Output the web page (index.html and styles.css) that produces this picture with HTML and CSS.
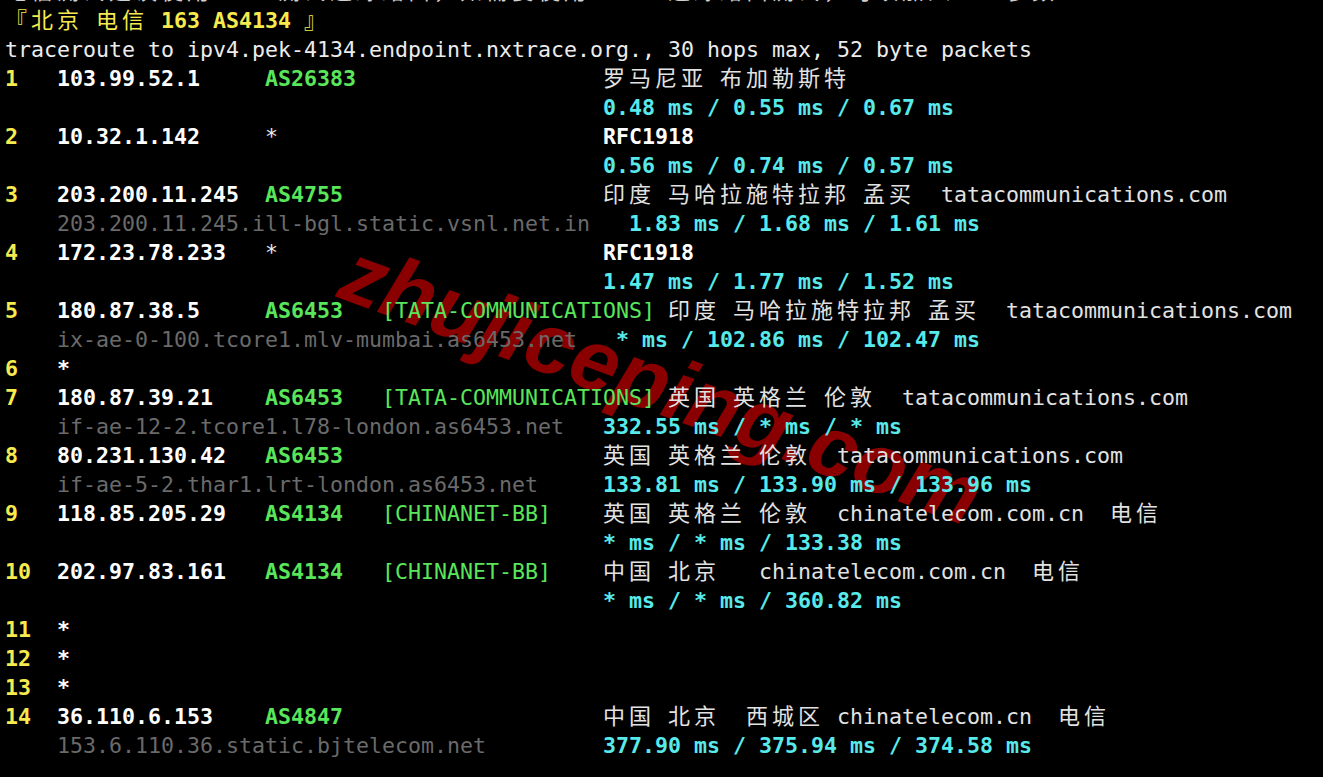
FILE: index.html
```html
<!DOCTYPE html>
<html lang="zh-CN">
<head>
  <meta charset="UTF-8" />
  <title>nexttrace - 北京电信</title>
  <link rel="stylesheet" href="styles.css">
</head>
<body>

<div class="mark">zhujiceping.com</div>

<div class="term">
  <!-- previous line, scrolled mostly out of view -->
  <div class="ln dim"><span class="c">电信测试建议使用</span>     <span class="c">测试追踪路由，如需要使用</span>      <span class="c">追踪路由测试，可以加入</span> -T <span class="c">参数</span></div>

  <div class="ln"><span class="hy"><span class="c">『北京</span> <span class="c">电信</span></span> <span class="hl">163 AS4134</span> <span class="hy c">』</span></div>
  <div class="ln">traceroute to ipv4.pek-4134.endpoint.nxtrace.org., 30 hops max, 52 byte packets</div>

  <div class="ln"><span class="hop">1</span><span class="ip">103.99.52.1</span><span class="asn">AS26383</span><span class="org"></span><span class="loc"><span class="c">罗马尼亚</span> <span class="c">布加勒斯特</span></span></div>
  <div class="ln"><span class="hop"></span><span class="host"></span><span class="rtt">0.48 ms / 0.55 ms / 0.67 ms</span></div>

  <div class="ln"><span class="hop">2</span><span class="ip">10.32.1.142</span><span class="asn none">*</span><span class="org"></span><span class="rfc">RFC1918</span></div>
  <div class="ln"><span class="hop"></span><span class="host"></span><span class="rtt">0.56 ms / 0.74 ms / 0.57 ms</span></div>

  <div class="ln"><span class="hop">3</span><span class="ip">203.200.11.245</span><span class="asn">AS4755</span><span class="org"></span><span class="loc"><span class="c">印度</span> <span class="c">马哈拉施特拉邦</span> <span class="c">孟买</span>  tatacommunications.com</span></div>
  <div class="ln"><span class="hop"></span><span class="host">203.200.11.245.ill-bgl.static.vsnl.net.in</span><span class="rtt">1.83 ms / 1.68 ms / 1.61 ms</span></div>

  <div class="ln"><span class="hop">4</span><span class="ip">172.23.78.233</span><span class="asn none">*</span><span class="org"></span><span class="rfc">RFC1918</span></div>
  <div class="ln"><span class="hop"></span><span class="host"></span><span class="rtt">1.47 ms / 1.77 ms / 1.52 ms</span></div>

  <div class="ln"><span class="hop">5</span><span class="ip">180.87.38.5</span><span class="asn">AS6453</span><span class="org">[TATA-COMMUNICATIONS]</span><span class="loc"><span class="c">印度</span> <span class="c">马哈拉施特拉邦</span> <span class="c">孟买</span>  tatacommunications.com</span></div>
  <div class="ln"><span class="hop"></span><span class="host">ix-ae-0-100.tcore1.mlv-mumbai.as6453.net</span><span class="rtt">* ms / 102.86 ms / 102.47 ms</span></div>

  <div class="ln"><span class="hop">6</span><span class="ip">*</span></div>

  <div class="ln"><span class="hop">7</span><span class="ip">180.87.39.21</span><span class="asn">AS6453</span><span class="org">[TATA-COMMUNICATIONS]</span><span class="loc"><span class="c">英国</span> <span class="c">英格兰</span> <span class="c">伦敦</span>  tatacommunications.com</span></div>
  <div class="ln"><span class="hop"></span><span class="host">if-ae-12-2.tcore1.l78-london.as6453.net</span><span class="rtt">332.55 ms / * ms / * ms</span></div>

  <div class="ln"><span class="hop">8</span><span class="ip">80.231.130.42</span><span class="asn">AS6453</span><span class="org"></span><span class="loc"><span class="c">英国</span> <span class="c">英格兰</span> <span class="c">伦敦</span>  tatacommunications.com</span></div>
  <div class="ln"><span class="hop"></span><span class="host">if-ae-5-2.thar1.lrt-london.as6453.net</span><span class="rtt">133.81 ms / 133.90 ms / 133.96 ms</span></div>

  <div class="ln"><span class="hop">9</span><span class="ip">118.85.205.29</span><span class="asn">AS4134</span><span class="org">[CHINANET-BB]</span><span class="loc"><span class="c">英国</span> <span class="c">英格兰</span> <span class="c">伦敦</span>  chinatelecom.com.cn  <span class="c">电信</span></span></div>
  <div class="ln"><span class="hop"></span><span class="host"></span><span class="rtt">* ms / * ms / 133.38 ms</span></div>

  <div class="ln"><span class="hop">10</span><span class="ip">202.97.83.161</span><span class="asn">AS4134</span><span class="org">[CHINANET-BB]</span><span class="loc"><span class="c">中国</span> <span class="c">北京</span>   chinatelecom.com.cn  <span class="c">电信</span></span></div>
  <div class="ln"><span class="hop"></span><span class="host"></span><span class="rtt">* ms / * ms / 360.82 ms</span></div>

  <div class="ln"><span class="hop">11</span><span class="ip">*</span></div>
  <div class="ln"><span class="hop">12</span><span class="ip">*</span></div>
  <div class="ln"><span class="hop">13</span><span class="ip">*</span></div>

  <div class="ln"><span class="hop">14</span><span class="ip">36.110.6.153</span><span class="asn">AS4847</span><span class="org"></span><span class="loc"><span class="c">中国</span> <span class="c">北京</span>  <span class="c">西城区</span> chinatelecom.cn  <span class="c">电信</span></span></div>
  <div class="ln"><span class="hop"></span><span class="host">153.6.110.36.static.bjtelecom.net</span><span class="rtt">377.90 ms / 375.94 ms / 374.58 ms</span></div>
</div>

</body>
</html>
```

FILE: styles.css
```css
:root {
  --bg: #000;
  --text: #ececec;
  --yellow: #f6ea4e;
  --green: #5ae65a;
  --cyan: #58eaea;
  --gray: #6a6a6a;
  --mark: #8a0000;
}

* {
  box-sizing: border-box;
  margin: 0;
  padding: 0;
}

html, body {
  height: 100%;
  overflow: hidden;
  background: var(--bg);
}

body {
  position: relative;
  padding-left: 5px;
  font-family: "DejaVu Sans Mono", monospace;
  font-size: 21.6px;
  color: var(--text);
}

.term {
  position: relative;
  z-index: 1;
  margin-top: -23px;
}

.ln {
  height: 29px;
  line-height: 29px;
  white-space: pre;
}

.dim {
  color: #d0d0d0;
}

/* columns, measured in terminal cells */
.hop,
.ip,
.asn,
.org,
.host {
  display: inline-block;
}

.hop {
  width: 4ch;
  color: var(--yellow);
  font-weight: bold;
}

.ip {
  min-width: 16ch;
  color: #fff;
  font-weight: bold;
}

.asn {
  min-width: 9ch;
  color: var(--green);
  font-weight: bold;
}

.asn.none {
  color: var(--text);
  font-weight: normal;
}

.org {
  min-width: 17ch;
  padding-right: 1ch;
  color: var(--green);
}

.host {
  min-width: 42ch;
  padding-right: 3ch;
  color: var(--gray);
}

.rtt {
  color: var(--cyan);
  font-weight: bold;
}

.rfc {
  color: #fff;
  font-weight: bold;
}

.loc {
  color: #e2e2e2;
}

.hy {
  color: var(--yellow);
}

.hl {
  color: var(--yellow);
  font-weight: bold;
}

/* wide glyphs take two cells */
.c {
  font-family: "Noto Sans CJK SC", sans-serif;
  font-size: 22px;
  font-weight: normal;
  letter-spacing: 4px;
  line-height: 1;
}

.mark {
  position: absolute;
  left: 360px;
  top: 228px;
  z-index: 0;
  font: italic bold 86px "Liberation Sans", sans-serif;
  line-height: 1;
  color: var(--mark);
  white-space: nowrap;
  transform: rotate(20deg);
  transform-origin: 0 0;
}
```
